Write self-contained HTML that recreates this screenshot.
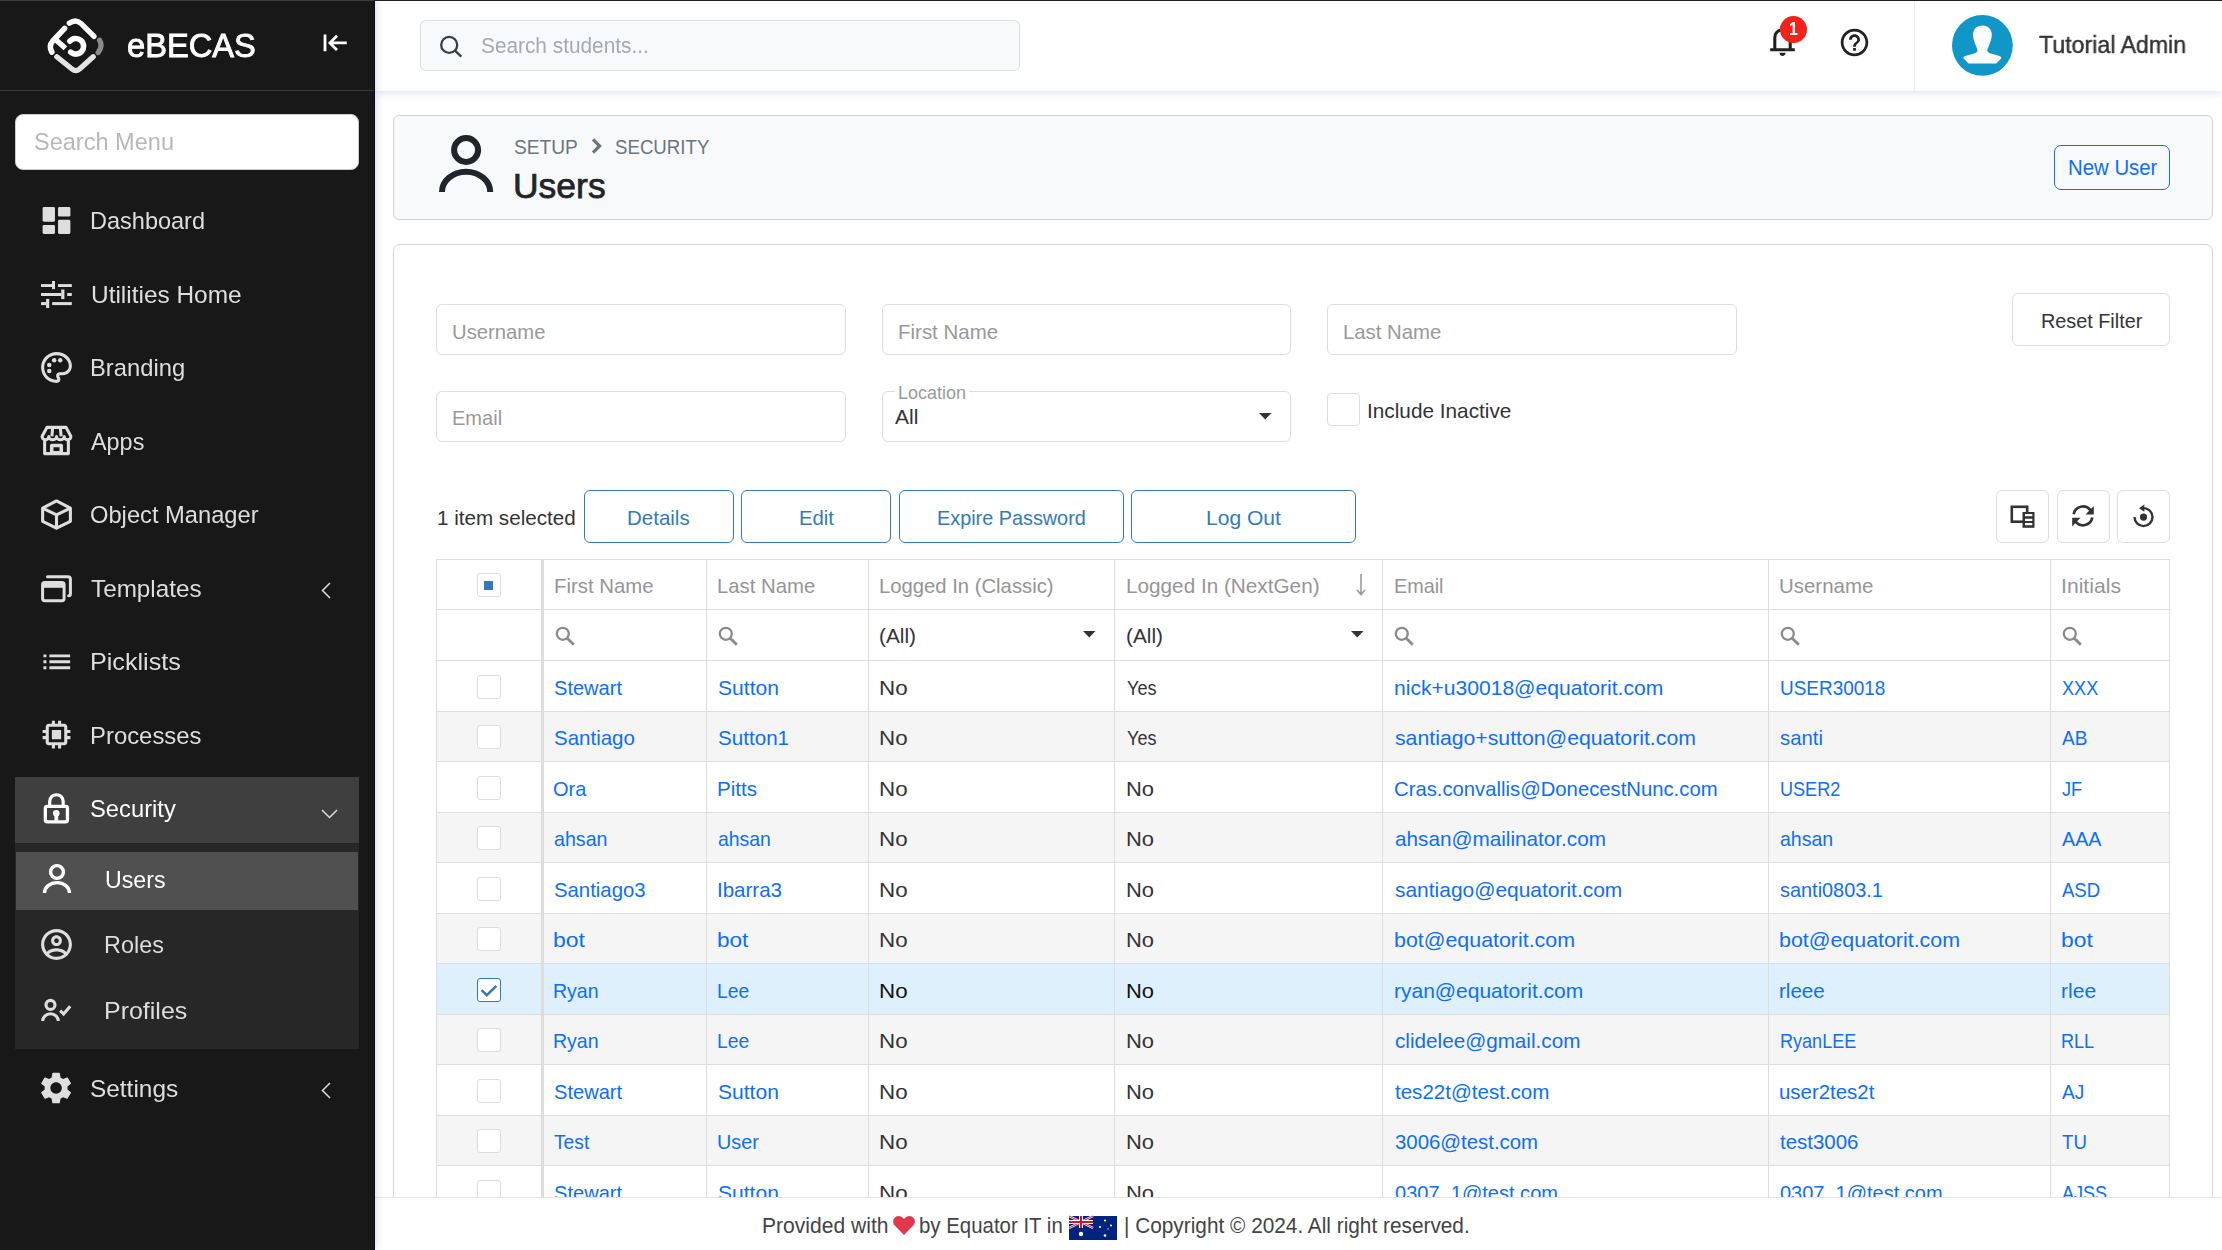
<!DOCTYPE html><html lang="en"><head><meta charset="utf-8"><title>Users - eBECAS</title><style>
*{box-sizing:border-box;margin:0;padding:0}
html,body{width:2222px;height:1250px;overflow:hidden;background:#fff}
body{font-family:"Liberation Sans",sans-serif;color:#333;position:relative}
.t{position:absolute;white-space:pre;transform-origin:0 0}
.abs{position:absolute}
svg{position:absolute;display:block;overflow:visible}
a{text-decoration:none;color:inherit}
h1{font-weight:400}
#sidebar{position:absolute;left:0;top:0;width:375px;height:1250px;background:#181818;color:#e0e0e0;border-right:1px solid #0b0b0b;box-shadow:2px 0 7px rgba(90,90,220,.2);z-index:5;will-change:transform}
#brand{position:absolute;left:0;top:0;width:374px;height:91px;border-bottom:1px solid #3a3a3a;border-top:1px solid #3d3d3d}
#msearch{position:absolute;left:15px;top:114px;width:344px;height:56px;background:#fff;border-radius:8px;border:1px solid #ccc}
.mi{position:absolute;left:15px;width:344px;height:66px}
#topbar{position:absolute;left:375px;top:0;width:1847px;height:91px;background:#fff;border-top:1px solid #222;box-shadow:0 1px 9px rgba(90,90,220,.22);z-index:4;will-change:transform}
#tsearch{position:absolute;left:45px;top:19px;width:600px;height:51px;background:#f8f9fb;border:1px solid #dcdcdc;border-radius:6px}
#phead{position:absolute;left:393px;top:115px;width:1820px;height:105px;background:#f8f9fb;border:1px solid #d2d2d2;border-radius:6px}
#card{position:absolute;left:393px;top:244px;width:1820px;height:1000px;background:#fff;border:1px solid #d6d6d6;border-radius:7px}
.inp{position:absolute;height:51px;border:1px solid #ddd;border-radius:6px;background:#fff}
.btn{position:absolute;height:53px;border:1px solid #337ab7;border-radius:6px;background:#fff;color:#337ab7}
.ibtn{position:absolute;width:53px;height:53px;border:1px solid #ddd;border-radius:6px;background:#fff}
#grid{position:absolute;left:436px;top:559px;width:1734px;height:700px;border-left:1px solid #ddd;border-right:1px solid #ddd;border-top:1px solid #ddd}
.row{position:absolute;left:0;width:1732px;border-bottom:1px solid #ddd}
.cell{position:absolute;top:0;height:100%;border-left:1px solid #ddd}
.cb{position:absolute;width:24px;height:24px;border:1px solid #ddd;border-radius:3px;background:#fff}
#footer{z-index:3;position:absolute;left:375px;top:1197px;width:1847px;height:53px;background:#fff;border-top:1px solid #e4e4e4;color:#444}
</style></head><body>
<aside id="sidebar">
<div id="brand">
<svg style="left:40.0px;top:9.8px" width="70" height="70" viewBox="40 10 70 70" ><g transform="translate(40 10)" fill="none" stroke-linecap="round" stroke-linejoin="round">
<path d="M29.300 12.200Q35.800 7.400 41.200 12.600L54 25.400" stroke="#fff" stroke-width="5.300"/>
<path d="M59.600 29.300Q63.200 34.600 58.200 41.500" stroke="#8a8a8a" stroke-width="5.300"/>
<path d="M16.800 45.800 32 58Q35.800 61.200 39.600 58L53.200 45.800" stroke="#e4e4e4" stroke-width="5.300"/>
<path d="M24.600 17.300 12.600 30.200Q8.400 35 11.900 41" stroke="#fff" stroke-width="5.500"/>
<path d="M16.600 29.500 25.400 37.200" stroke="#fff" stroke-width="5.400" stroke-linecap="butt"/>
<path d="M29.900 30.200A7.800 7.800 0 1 1 30.700 41.200" stroke="#fff" stroke-width="5.600"/>
</g></svg>
<span class="t" style="left:127.41px;top:26px;font-size:32.8px;line-height:37px;color:#fff;transform:scaleX(0.9949);-webkit-text-stroke:0.9px #fff;">eBECAS</span>
<svg style="left:322px;top:32px" width="26" height="20" viewBox="322 33 26 20" fill="none" stroke="#fff" stroke-width="2.800"><path d="M325 34.500v16.800M346.800 42.900H330M337 35.800l-7.100 7.100 7.100 7.100"/></svg>
</div>
<div id="msearch"><span class="t" style="left:18.04px;top:13px;font-size:24.4px;line-height:27px;color:#b8b8b8;transform:scaleX(0.9649);">Search Menu</span></div>
<nav>
<a class="mi" style="top:187px;">
<svg style="left:23.0px;top:14.8px" width="37.00" height="37.00" viewBox="0 0 24 24" fill="#dedede" ><rect x="3" y="3.250" width="8" height="9.500" rx=".9"/><rect x="3" y="14.850" width="8" height="5.900" rx=".9"/><rect x="13" y="3.250" width="8" height="6.200" rx=".9"/><rect x="13" y="11.500" width="8" height="9.250" rx=".9"/></svg>
<span class="t" style="left:74.68px;top:20px;font-size:24.5px;line-height:27px;color:#dedede;transform:scaleX(0.9596);">Dashboard</span>
</a>
<a class="mi" style="top:261px;">
<svg style="left:26.1px;top:19.8px" width="30.8" height="27" viewBox="41.1 280.9 30.8 27" fill="#dedede"><rect x="41.1" y="284.0" width="11.0" height="2.9"/><rect x="52.1" y="280.9" width="3.0" height="8.1"/><rect x="58.1" y="284.0" width="13.8" height="2.9"/><rect x="41.1" y="292.9" width="20.2" height="3.0"/><rect x="61.3" y="289.4" width="3.2" height="9.6"/><rect x="67.3" y="292.9" width="4.6" height="3.0"/><rect x="41.1" y="302.0" width="5.1" height="3.0"/><rect x="46.2" y="298.8" width="3.1" height="9.1"/><rect x="52.3" y="302.0" width="19.6" height="3.0"/></svg>
<span class="t" style="left:75.60px;top:20px;font-size:24.5px;line-height:27px;color:#dedede;transform:scaleX(0.9967);">Utilities Home</span>
</a>
<a class="mi" style="top:334px;">
<svg style="left:23.0px;top:14.8px" width="37.00" height="37.00" viewBox="0 0 24 24" fill="#dedede" ><path d="M12 22C6.490 22 2 17.510 2 12S6.490 2 12 2s10 4.040 10 9c0 3.310-2.690 6-6 6h-1.770c-.280 0-.500.220-.500.500 0 .120.050.230.130.330.410.470.640 1.060.640 1.670A2.500 2.500 0 0 1 12 22zm0-18c-4.410 0-8 3.590-8 8s3.590 8 8 8c.280 0 .500-.220.500-.500a.540.540 0 0 0-.140-.350c-.410-.460-.630-1.050-.630-1.650a2.500 2.500 0 0 1 2.500-2.500H16c2.210 0 4-1.790 4-4 0-3.860-3.590-7-8-7z"/><circle cx="7.300" cy="14.300" r="1.450"/><circle cx="7.300" cy="10.400" r="1.450"/><circle cx="10.500" cy="7.300" r="1.450"/><circle cx="14.400" cy="7.300" r="1.450"/></svg>
<span class="t" style="left:74.66px;top:20px;font-size:24.5px;line-height:27px;color:#dedede;transform:scaleX(0.9702);">Branding</span>
</a>
<a class="mi" style="top:408px;">
<svg style="left:23.0px;top:14.3px" width="37.00" height="37.00" viewBox="0 0 24 24" fill="#dedede" ><g fill="none" stroke="#dedede" stroke-width="2" stroke-linejoin="round"><path d="M5.800 3.500h12.400l3.100 5.800c.2 1.300-.8 2.200-2 2.200-1.300 0-2.300-.9-2.300-2 0 1.100-1.100 2-2.500 2s-2.500-.900-2.500-2c0 1.100-1.100 2-2.500 2s-2.500-.900-2.500-2c0 1.100-1 2-2.300 2-1.200 0-2.200-.900-2-2.200z"/><path d="M9.500 3.800 9 9.300M14.500 3.800l.500 5.500M4.300 11.300V20.500h15.400V11.300"/><path d="M8.900 20.500v-5.300h6.200v5.300" stroke-width="2.300"/></g><rect x="9" y="18.800" width="6" height="1.800"/></svg>
<span class="t" style="left:75.50px;top:20px;font-size:24.5px;line-height:27px;color:#dedede;transform:scaleX(0.9552);">Apps</span>
</a>
<a class="mi" style="top:481px;">
<svg style="left:23.0px;top:14.8px" width="37.00" height="37.00" viewBox="0 0 24 24" fill="#dedede" ><path d="M12 3.200 3 7.800v8.600l9 4.500 9-4.500V7.800zM3.300 8l8.700 4.300L20.700 8M12 12.300v8.400" fill="none" stroke="#dedede" stroke-width="2" stroke-linejoin="round"/></svg>
<span class="t" style="left:75.03px;top:20px;font-size:24.5px;line-height:27px;color:#dedede;transform:scaleX(0.9674);">Object Manager</span>
</a>
<a class="mi" style="top:555px;">
<svg style="left:25.0px;top:18.6px" width="33" height="29" viewBox="40 574 33 29"><path d="M47.500 576.700H68a2.400 2.400 0 0 1 2.400 2.400V594a1.800 1.800 0 0 1-1.800 1.800" fill="none" stroke="#dedede" stroke-width="3" stroke-linecap="round"/><rect x="42.600" y="582.600" width="21.500" height="18.100" rx="2.200" fill="none" stroke="#dedede" stroke-width="3"/><rect x="42" y="582" width="22.700" height="5.800" fill="#dedede"/></svg>
<span class="t" style="left:75.50px;top:20px;font-size:24.5px;line-height:27px;color:#dedede;transform:scaleX(0.9909);">Templates</span>
<svg style="left:306.3px;top:27.0px" width="10" height="17" viewBox="0 0 10 17" fill="none" stroke="#dcdcdc" stroke-width="1.500"><path d="M9 1 1.500 8.500 9 16"/></svg>
</a>
<a class="mi" style="top:628px;">
<svg style="left:23.7px;top:15.5px" width="35.60" height="35.60" viewBox="0 0 24 24" fill="#dedede" ><path d="M3 13h2v-2H3v2zm0 4h2v-2H3v2zm0-8h2V7H3v2zm4 4h14v-2H7v2zm0 4h14v-2H7v2zM7 7v2h14V7H7z"/></svg>
<span class="t" style="left:74.55px;top:20px;font-size:24.5px;line-height:27px;color:#dedede;transform:scaleX(1.0264);">Picklists</span>
</a>
<a class="mi" style="top:702px;">
<svg style="left:23.0px;top:14.3px" width="37.00" height="37.00" viewBox="0 0 24 24" fill="#dedede" ><path d="M15 9H9v6h6V9zm6 2V9h-2V7c0-1.100-.900-2-2-2h-2V3h-2v2h-2V3H9v2H7c-1.100 0-2 .900-2 2v2H3v2h2v2H3v2h2v2c0 1.100.900 2 2 2h2v2h2v-2h2v2h2v-2h2c1.100 0 2-.900 2-2v-2h2v-2h-2v-2h2zm-4 6H7V7h10v10z"/></svg>
<span class="t" style="left:74.65px;top:20px;font-size:24.5px;line-height:27px;color:#dedede;transform:scaleX(0.9748);">Processes</span>
</a>
<a class="mi" style="top:777px;background:#3f3f3f;">
<svg style="left:27.1px;top:14.0px" width="29" height="34" viewBox="42 791 29 34"><rect x="45.350" y="806.450" width="22.100" height="15.400" rx="1.800" fill="none" stroke="#fff" stroke-width="3.300"/><path d="M49.700 805.500V801.500A6.750 6.750 0 0 1 63.200 801.500V805.500" fill="none" stroke="#fff" stroke-width="3.200"/><circle cx="56.300" cy="813.300" r="3.300" fill="#fff"/><rect x="54.400" y="813.300" width="3.800" height="7.500" fill="#fff"/></svg>
<span class="t" style="left:74.53px;top:18px;font-size:24.5px;line-height:27px;color:#fff;transform:scaleX(0.9700);">Security</span>
<svg style="left:306.1px;top:31.8px" width="17" height="10" viewBox="0 0 17 10" fill="none" stroke="#dcdcdc" stroke-width="1.500"><path d="M1 1 8.500 8.500 16 1"/></svg>
</a>
<div class="abs" style="left:15px;top:843px;width:344px;height:206px;background:#272727">
<a class="abs" style="left:1px;top:9px;width:342px;height:58px;background:#505050;">
<svg style="left:25.5px;top:11.1px" width="30.0" height="30.0" viewBox="25.50 11.10 30.00 30.00" fill="none" stroke="#fff" stroke-width="3.40"><circle cx="40.50" cy="20.10" r="6.40"/><path d="M28.00 41.10A12.50 10.40 0 0 1 53.00 41.10"/></svg>
<span class="t" style="left:88.95px;top:14px;font-size:24.5px;line-height:27px;color:#fff;transform:scaleX(0.9454);">Users</span>
</a>
<a class="abs" style="left:1px;top:74px;width:342px;height:58px;">
<svg style="left:22.0px;top:8.7px" width="37.00" height="37.00" viewBox="0 0 24 24" fill="#dedede" ><path d="M12 2C6.480 2 2 6.480 2 12s4.480 10 10 10 10-4.480 10-10S17.520 2 12 2zM7.070 18.280c.430-.900 3.050-1.780 4.930-1.780s4.510.880 4.930 1.780A7.893 7.893 0 0 1 12 20c-1.860 0-3.570-.640-4.930-1.720zm11.290-1.450c-1.430-1.740-4.900-2.330-6.360-2.330s-4.930.590-6.360 2.330A7.950 7.950 0 0 1 4 12c0-4.410 3.590-8 8-8s8 3.590 8 8c0 1.820-.620 3.490-1.640 4.830zM12 6c-1.940 0-3.500 1.560-3.500 3.500S10.060 13 12 13s3.500-1.560 3.500-3.500S13.940 6 12 6zm0 5c-.830 0-1.500-.670-1.500-1.500S11.170 8 12 8s1.500.670 1.500 1.500S12.830 11 12 11z"/></svg>
<span class="t" style="left:87.99px;top:14px;font-size:24.5px;line-height:27px;color:#dedede;transform:scaleX(0.9555);">Roles</span>
</a>
<a class="abs" style="left:1px;top:140px;width:342px;height:58px;">
<svg style="left:24.3px;top:14.0px" width="33" height="26" viewBox="40 997 33 26" fill="none" stroke="#dedede" stroke-width="3.100"><circle cx="50.500" cy="1004.900" r="4.500"/><path d="M42.700 1021.100A7.800 7.400 0 0 1 58.300 1021.100"/><path d="M60.200 1010.700 63.600 1014 70.200 1006.200" stroke-width="3.100"/></svg>
<span class="t" style="left:87.86px;top:14px;font-size:24.5px;line-height:27px;color:#dedede;transform:scaleX(1.0196);">Profiles</span>
</a>
</div>
<a class="mi" style="top:1055px">
<svg style="left:22.4px;top:14.0px" width="38.20" height="38.20" viewBox="0 0 24 24" fill="#dedede" ><path d="M19.140 12.940c.040-.300.060-.610.060-.940 0-.320-.020-.640-.070-.940l2.030-1.580a.490.490 0 0 0 .120-.610l-1.920-3.320a.488.488 0 0 0-.590-.220l-2.390.960c-.500-.380-1.030-.700-1.620-.940l-.360-2.540a.484.484 0 0 0-.480-.410h-3.840c-.240 0-.430.170-.470.410l-.360 2.540c-.590.240-1.130.570-1.620.940l-2.390-.960c-.220-.080-.470 0-.590.220L2.740 8.870c-.120.210-.080.470.120.610l2.030 1.580c-.050.300-.090.630-.090.940s.020.640.070.940l-2.030 1.580a.490.490 0 0 0-.120.610l1.920 3.320c.120.220.370.290.590.220l2.390-.960c.500.380 1.030.700 1.620.940l.360 2.540c.050.240.240.410.480.410h3.840c.240 0 .440-.170.470-.410l.360-2.540c.590-.240 1.130-.560 1.620-.940l2.390.960c.220.080.470 0 .590-.220l1.920-3.320c.120-.220.070-.470-.120-.610l-2.010-1.580zM12 15.600c-1.980 0-3.600-1.620-3.600-3.600s1.620-3.600 3.600-3.600 3.600 1.620 3.600 3.600-1.620 3.600-3.600 3.600z"/></svg>
<span class="t" style="left:74.50px;top:20px;font-size:24.5px;line-height:27px;color:#dedede;transform:scaleX(0.9957);">Settings</span>
<svg style="left:306.0px;top:26.7px" width="10" height="17" viewBox="0 0 10 17" fill="none" stroke="#dcdcdc" stroke-width="1.500"><path d="M9 1 1.500 8.500 9 16"/></svg>
</a>
</nav></aside>
<header id="topbar">
<div id="tsearch">
<svg style="left:16.0px;top:12.0px" width="28" height="27" viewBox="437 33 28 27" fill="none" stroke="#383e45" stroke-width="2.300"><circle cx="449.200" cy="44.900" r="8" /><path d="M455 50.700 461.300 56.700"/></svg>
<span class="t" style="left:59.87px;top:12px;font-size:22.3px;line-height:25px;color:#a6a9ad;transform:scaleX(0.9334);">Search students...</span>
</div>
<svg style="left:1389.3px;top:21.3px" width="37" height="37" viewBox="0 0 24 24" fill="#222"><path d="M4 19v-2h2v-7q0-2.075 1.250-3.687T10.500 4.200v-.700q0-.625.438-1.062T12 2t1.063.438T13.500 3.500v.700q2 .500 3.250 2.113T18 10v7h2v2zm8 3q-.825 0-1.412-.587T10 20h4q0 .825-.587 1.413T12 22m-4-5h8v-7q0-1.650-1.175-2.825T12 6 9.175 7.175 8 10z"/></svg>
<div class="abs" style="left:1405.1px;top:15px;width:26.800px;height:26.800px;border-radius:50%;background:#f2231b"></div>
<span class="t" style="left:1414.14px;top:17px;font-size:18.5px;line-height:21px;font-weight:700;color:#fff;transform:scaleX(0.8600);">1</span>
<svg style="left:1463.0px;top:25.0px" width="33" height="33" viewBox="0 0 24 24" fill="#222"><path d="M11 18h2v-2h-2v2zm1-16C6.480 2 2 6.480 2 12s4.480 10 10 10 10-4.480 10-10S17.520 2 12 2zm0 18c-4.410 0-8-3.590-8-8s3.590-8 8-8 8 3.590 8 8-3.590 8-8 8zm0-14c-2.210 0-4 1.790-4 4h2c0-1.100.900-2 2-2s2 .900 2 2c0 2-3 1.750-3 5h2c0-2.250 3-2.500 3-5 0-2.210-1.790-4-4-4z"/></svg>
<div class="abs" style="left:1539px;top:0;width:1px;height:90px;background:#e9e9e9"></div>
<svg style="left:1577.1px;top:14.4px" width="60.8" height="60.8" viewBox="0 0 60.800 60.800"><circle cx="30.400" cy="30.400" r="30.400" fill="#1196c8"/><path d="M30.400 10.400C36 10.400 39.800 14 39.800 19.800 39.800 24 38 28 36.700 31.200 36 33 35.200 34 35.400 35.500 35.600 37 36.500 37.700 38 38.200L47.500 41C49 41.500 49.800 42.300 49.200 43.400L44.200 48.600H16.600L11.600 43.400C11 42.300 11.800 41.500 13.300 41L22.800 38.200C24.300 37.700 25.200 37 25.400 35.500 25.600 34 24.800 33 24.100 31.200 22.800 28 21 24 21 19.800 21 14 24.800 10.400 30.400 10.400Z" fill="#fff"/></svg>
<span class="t" style="left:1663.70px;top:30px;font-size:24.2px;line-height:27px;color:#333;transform:scaleX(0.9571);-webkit-text-stroke:0.45px #333;">Tutorial Admin</span>
</header>
<section id="phead">
<svg style="left:42.0px;top:17.0px" width="60" height="60" viewBox="436 133 60 60" fill="none" stroke="#212529" stroke-width="6"><circle cx="466.100" cy="150" r="12"/><path d="M442 192A24.100 20.300 0 0 1 490.200 192"/></svg>
<span class="t" style="left:120.30px;top:20px;font-size:20px;line-height:22px;color:#6c757d;transform:scaleX(0.9557);">SETUP</span>
<svg style="left:196.5px;top:22.2px" width="11" height="16" viewBox="0 0 11 16" fill="none" stroke="#6c757d" stroke-width="3.200"><path d="M2 1.400 8.600 8 2 14.600"/></svg>
<span class="t" style="left:220.70px;top:20px;font-size:20px;line-height:22px;color:#6c757d;transform:scaleX(0.9327);">SECURITY</span>
<h1 class="t" style="left:119.30px;top:50px;font-size:35.5px;line-height:40px;color:#212529;transform:scaleX(0.9994);-webkit-text-stroke:0.75px #212529;">Users</h1>
<a class="abs" style="left:1660px;top:29px;width:116px;height:45px;border:1.500px solid #0d6efd;border-radius:7px"></a>
<span class="t" style="left:1673.65px;top:40px;font-size:21.4px;line-height:24px;color:#0d6efd;transform:scaleX(0.9518);">New User</span>
</section>
<section id="card">
<div class="inp" style="left:42px;top:59px;width:410px"><span class="t" style="left:15.34px;top:15px;font-size:21px;line-height:23px;color:#999;transform:scaleX(0.9644);">Username</span></div>
<div class="inp" style="left:488px;top:59px;width:409px"><span class="t" style="left:14.92px;top:15px;font-size:21px;line-height:23px;color:#999;transform:scaleX(0.9753);">First Name</span></div>
<div class="inp" style="left:933px;top:59px;width:410px"><span class="t" style="left:15.33px;top:15px;font-size:21px;line-height:23px;color:#999;transform:scaleX(0.9683);">Last Name</span></div>
<div class="inp" style="left:42px;top:146px;width:410px"><span class="t" style="left:15.35px;top:14px;font-size:21px;line-height:23px;color:#999;transform:scaleX(0.9539);">Email</span></div>
<div class="inp" style="left:488px;top:146px;width:409px">
<div class="abs" style="left:11.5px;top:-8px;width:74.5px;height:16px;background:#fff"></div>
<span class="t" style="left:14.87px;top:-9px;font-size:17.5px;line-height:20px;color:#999;transform:scaleX(1.0290);">Location</span>
<span class="t" style="left:12.30px;top:13px;font-size:21px;line-height:23px;color:#333;transform:scaleX(1.0012);">All</span>
<svg style="left:376.0px;top:20.8px" width="12.5" height="6.5" viewBox="0 0 12.5 6.5"><path d="M0 0h12.5L6.25 6.5z" fill="#333"/></svg>
</div>
<div class="abs" style="left:933px;top:148px;width:33px;height:33px;border:1px solid #ddd;border-radius:4px;background:#fff"></div>
<span class="t" style="left:973.31px;top:154px;font-size:21px;line-height:23px;color:#333;transform:scaleX(0.9893);">Include Inactive</span>
<a class="abs" style="left:1618px;top:48px;width:158px;height:53px;border:1px solid #ddd;border-radius:6px;background:#fff"></a>
<span class="t" style="left:1646.56px;top:64px;font-size:21px;line-height:23px;color:#333;transform:scaleX(0.9430);">Reset Filter</span>
<span class="t" style="left:43.32px;top:261px;font-size:21px;line-height:23px;color:#333;transform:scaleX(0.9817);">1 item selected</span>
<a class="btn" style="left:190px;top:245px;width:150px"><span class="t" style="left:42.42px;top:15px;font-size:21px;line-height:23px;color:#337ab7;transform:scaleX(0.9762);">Details</span></a>
<a class="btn" style="left:347px;top:245px;width:150px"><span class="t" style="left:56.83px;top:15px;font-size:21px;line-height:23px;color:#337ab7;transform:scaleX(0.9674);">Edit</span></a>
<a class="btn" style="left:505px;top:245px;width:225px"><span class="t" style="left:36.66px;top:15px;font-size:21px;line-height:23px;color:#337ab7;transform:scaleX(0.9443);">Expire Password</span></a>
<a class="btn" style="left:737px;top:245px;width:225px"><span class="t" style="left:74.00px;top:15px;font-size:21px;line-height:23px;color:#337ab7;transform:scaleX(1.0015);">Log Out</span></a>
<a class="ibtn" style="left:1602px;top:245px"><svg style="left:12.0px;top:13.0px" width="28" height="26" viewBox="2009 504 28 26" ><rect x="2011.800" y="506.800" width="15.400" height="14.900" fill="none" stroke="#333" stroke-width="2.600"/><rect x="2022.500" y="512" width="12" height="15.800" fill="#333"/><path d="M2025 515.150h7.300M2025 519.850h7.300M2025 524.100h7.300" stroke="#fff" stroke-width="2.100"/></svg></a>
<a class="ibtn" style="left:1663px;top:245px"><svg style="left:12.0px;top:12.0px" width="26" height="26" viewBox="2070 503 26 26" ><path d="M2073.700 514.200A9.400 9.400 0 0 1 2090.600 510.400" fill="none" stroke="#333" stroke-width="2.700"/><path d="M2085.500 514.600 2093.800 506v8.600z" fill="#333"/><path d="M2092.300 517.500A9.400 9.400 0 0 1 2075.400 521.300" fill="none" stroke="#333" stroke-width="2.700"/><path d="M2080.500 517.800 2072.200 526.400v-8.600z" fill="#333"/></svg></a>
<a class="ibtn" style="left:1723px;top:245px"><svg style="left:13.0px;top:12.0px" width="26" height="26" viewBox="2131 503 26 26" ><path d="M2143.500 508.100A9 9 0 1 1 2134.500 517.100" fill="none" stroke="#333" stroke-width="2.400"/><path d="M2139 508.200 2144.300 504.600v7.200z" fill="#333"/><circle cx="2143.500" cy="517.100" r="3.600" fill="#333"/></svg></a>
</section>
<div id="grid" role="grid">
<div class="row" role="row" style="top:0px;height:50px;background:#fff;">
<div class="cell" role="gridcell" style="left:0;width:104px;border-left:0;"><div class="cb" style="left:40px;top:13px"><div class="abs" style="left:6px;top:7px;width:9px;height:9px;background:#337ab7"></div></div></div>
<div class="cell" role="gridcell" style="left:104px;width:165px;border-left:3px solid #ddd;"><span class="t" style="left:9.53px;top:14px;font-size:21px;line-height:23px;color:#959595;transform:scaleX(0.9704);">First Name</span></div>
<div class="cell" role="gridcell" style="left:269px;width:162px;"><span class="t" style="left:10.33px;top:14px;font-size:21px;line-height:23px;color:#959595;transform:scaleX(0.9683);">Last Name</span></div>
<div class="cell" role="gridcell" style="left:431px;width:246px;"><span class="t" style="left:10.44px;top:14px;font-size:21px;line-height:23px;color:#959595;transform:scaleX(0.9646);">Logged In (Classic)</span></div>
<div class="cell" role="gridcell" style="left:677px;width:268px;"><span class="t" style="left:10.61px;top:14px;font-size:21px;line-height:23px;color:#959595;transform:scaleX(0.9870);">Logged In (NextGen)</span><svg style="left:240.5px;top:13.5px" width="10" height="22" viewBox="0 0 10 22" fill="none" stroke="#959595" stroke-width="1.500"><path d="M5 0v20M1 16l4 4.500L9 16"/></svg></div>
<div class="cell" role="gridcell" style="left:945px;width:386px;"><span class="t" style="left:10.56px;top:14px;font-size:21px;line-height:23px;color:#959595;transform:scaleX(0.9421);">Email</span></div>
<div class="cell" role="gridcell" style="left:1331px;width:282px;"><span class="t" style="left:9.83px;top:14px;font-size:21px;line-height:23px;color:#959595;transform:scaleX(0.9738);">Username</span></div>
<div class="cell" role="gridcell" style="left:1613px;width:119px;"><span class="t" style="left:9.69px;top:14px;font-size:21px;line-height:23px;color:#959595;transform:scaleX(1.0082);">Initials</span></div>
</div>
<div class="row" role="row" style="top:50px;height:51px;background:#fff;">
<div class="cell" role="gridcell" style="left:0;width:104px;border-left:0;"></div>
<div class="cell" role="gridcell" style="left:104px;width:165px;border-left:3px solid #ddd;"><svg style="left:10.5px;top:15.5px" width="20" height="20" viewBox="0 0 20 20" fill="none" stroke="#8a8a8a" stroke-width="2.300"><circle cx="7.800" cy="7.800" r="6"/><path d="M12 12l6.800 6.800" stroke-width="2.800"/></svg></div>
<div class="cell" role="gridcell" style="left:269px;width:162px;"><svg style="left:10.5px;top:15.5px" width="20" height="20" viewBox="0 0 20 20" fill="none" stroke="#8a8a8a" stroke-width="2.300"><circle cx="7.800" cy="7.800" r="6"/><path d="M12 12l6.800 6.800" stroke-width="2.800"/></svg></div>
<div class="cell" role="gridcell" style="left:431px;width:246px;"><span class="t" style="left:10.41px;top:14px;font-size:21px;line-height:23px;color:#333;transform:scaleX(0.9906);">(All)</span><svg style="left:213.5px;top:20.8px" width="12.5" height="6.5" viewBox="0 0 12.5 6.5"><path d="M0 0h12.5L6.25 6.5z" fill="#333"/></svg></div>
<div class="cell" role="gridcell" style="left:677px;width:268px;"><span class="t" style="left:10.51px;top:14px;font-size:21px;line-height:23px;color:#333;transform:scaleX(0.9906);">(All)</span><svg style="left:235.5px;top:20.8px" width="12.5" height="6.5" viewBox="0 0 12.5 6.5"><path d="M0 0h12.5L6.25 6.5z" fill="#333"/></svg></div>
<div class="cell" role="gridcell" style="left:945px;width:386px;"><svg style="left:10.5px;top:15.5px" width="20" height="20" viewBox="0 0 20 20" fill="none" stroke="#8a8a8a" stroke-width="2.300"><circle cx="7.800" cy="7.800" r="6"/><path d="M12 12l6.800 6.800" stroke-width="2.800"/></svg></div>
<div class="cell" role="gridcell" style="left:1331px;width:282px;"><svg style="left:10.5px;top:15.5px" width="20" height="20" viewBox="0 0 20 20" fill="none" stroke="#8a8a8a" stroke-width="2.300"><circle cx="7.800" cy="7.800" r="6"/><path d="M12 12l6.800 6.800" stroke-width="2.800"/></svg></div>
<div class="cell" role="gridcell" style="left:1613px;width:119px;"><svg style="left:10.5px;top:15.5px" width="20" height="20" viewBox="0 0 20 20" fill="none" stroke="#8a8a8a" stroke-width="2.300"><circle cx="7.800" cy="7.800" r="6"/><path d="M12 12l6.800 6.800" stroke-width="2.800"/></svg></div>
</div>
<div class="row" role="row" style="top:101px;height:51px;background:#fff;">
<div class="cell" role="gridcell" style="left:0;width:104px;border-left:0;"><div class="cb" style="left:40px;top:14px"></div></div>
<div class="cell" role="gridcell" style="left:104px;width:165px;border-left:3px solid #ddd;"><a class="t" style="left:9.60px;top:15px;font-size:21px;line-height:23px;color:#0d6efd;transform:scaleX(0.9557);">Stewart</a></div>
<div class="cell" role="gridcell" style="left:269px;width:162px;"><a class="t" style="left:11.20px;top:15px;font-size:21px;line-height:23px;color:#0d6efd;transform:scaleX(1.0044);">Sutton</a></div>
<div class="cell" role="gridcell" style="left:431px;width:246px;"><span class="t" style="left:10.14px;top:15px;font-size:21px;line-height:23px;color:#333;transform:scaleX(1.0649);">No</span></div>
<div class="cell" role="gridcell" style="left:677px;width:268px;"><span class="t" style="left:11.70px;top:15px;font-size:21px;line-height:23px;color:#333;transform:scaleX(0.8600);">Yes</span></div>
<div class="cell" role="gridcell" style="left:945px;width:386px;"><a class="t" style="left:10.60px;top:15px;font-size:21px;line-height:23px;color:#0d6efd;transform:scaleX(1.0036);">nick+u30018@equatorit.com</a></div>
<div class="cell" role="gridcell" style="left:1331px;width:282px;"><a class="t" style="left:10.50px;top:15px;font-size:21px;line-height:23px;color:#0d6efd;transform:scaleX(0.9021);">USER30018</a></div>
<div class="cell" role="gridcell" style="left:1613px;width:119px;"><a class="t" style="left:10.60px;top:15px;font-size:21px;line-height:23px;color:#0d6efd;transform:scaleX(0.8616);">XXX</a></div>
</div>
<div class="row" role="row" style="top:152px;height:50px;background:#f5f5f5;">
<div class="cell" role="gridcell" style="left:0;width:104px;border-left:0;"><div class="cb" style="left:40px;top:13px"></div></div>
<div class="cell" role="gridcell" style="left:104px;width:165px;border-left:3px solid #ddd;"><a class="t" style="left:9.60px;top:14px;font-size:21px;line-height:23px;color:#0d6efd;transform:scaleX(0.9754);">Santiago</a></div>
<div class="cell" role="gridcell" style="left:269px;width:162px;"><a class="t" style="left:11.20px;top:14px;font-size:21px;line-height:23px;color:#0d6efd;transform:scaleX(0.9817);">Sutton1</a></div>
<div class="cell" role="gridcell" style="left:431px;width:246px;"><span class="t" style="left:10.14px;top:14px;font-size:21px;line-height:23px;color:#333;transform:scaleX(1.0649);">No</span></div>
<div class="cell" role="gridcell" style="left:677px;width:268px;"><span class="t" style="left:11.70px;top:14px;font-size:21px;line-height:23px;color:#333;transform:scaleX(0.8600);">Yes</span></div>
<div class="cell" role="gridcell" style="left:945px;width:386px;"><a class="t" style="left:11.60px;top:14px;font-size:21px;line-height:23px;color:#0d6efd;transform:scaleX(1.0117);">santiago+sutton@equatorit.com</a></div>
<div class="cell" role="gridcell" style="left:1331px;width:282px;"><a class="t" style="left:11.40px;top:14px;font-size:21px;line-height:23px;color:#0d6efd;transform:scaleX(0.9681);">santi</a></div>
<div class="cell" role="gridcell" style="left:1613px;width:119px;"><a class="t" style="left:10.60px;top:14px;font-size:21px;line-height:23px;color:#0d6efd;transform:scaleX(0.9072);">AB</a></div>
</div>
<div class="row" role="row" style="top:202px;height:51px;background:#fff;">
<div class="cell" role="gridcell" style="left:0;width:104px;border-left:0;"><div class="cb" style="left:40px;top:14px"></div></div>
<div class="cell" role="gridcell" style="left:104px;width:165px;border-left:3px solid #ddd;"><a class="t" style="left:8.65px;top:15px;font-size:21px;line-height:23px;color:#0d6efd;transform:scaleX(0.9526);">Ora</a></div>
<div class="cell" role="gridcell" style="left:269px;width:162px;"><a class="t" style="left:10.22px;top:15px;font-size:21px;line-height:23px;color:#0d6efd;transform:scaleX(0.9786);">Pitts</a></div>
<div class="cell" role="gridcell" style="left:431px;width:246px;"><span class="t" style="left:10.14px;top:15px;font-size:21px;line-height:23px;color:#333;transform:scaleX(1.0649);">No</span></div>
<div class="cell" role="gridcell" style="left:677px;width:268px;"><span class="t" style="left:10.65px;top:15px;font-size:21px;line-height:23px;color:#333;transform:scaleX(1.0451);">No</span></div>
<div class="cell" role="gridcell" style="left:945px;width:386px;"><a class="t" style="left:10.63px;top:15px;font-size:21px;line-height:23px;color:#0d6efd;transform:scaleX(0.9650);">Cras.convallis@DonecestNunc.com</a></div>
<div class="cell" role="gridcell" style="left:1331px;width:282px;"><a class="t" style="left:10.54px;top:15px;font-size:21px;line-height:23px;color:#0d6efd;transform:scaleX(0.8600);">USER2</a></div>
<div class="cell" role="gridcell" style="left:1613px;width:119px;"><a class="t" style="left:10.60px;top:15px;font-size:21px;line-height:23px;color:#0d6efd;transform:scaleX(0.8600);">JF</a></div>
</div>
<div class="row" role="row" style="top:253px;height:50px;background:#f5f5f5;">
<div class="cell" role="gridcell" style="left:0;width:104px;border-left:0;"><div class="cb" style="left:40px;top:13px"></div></div>
<div class="cell" role="gridcell" style="left:104px;width:165px;border-left:3px solid #ddd;"><a class="t" style="left:9.60px;top:14px;font-size:21px;line-height:23px;color:#0d6efd;transform:scaleX(0.9357);">ahsan</a></div>
<div class="cell" role="gridcell" style="left:269px;width:162px;"><a class="t" style="left:11.20px;top:14px;font-size:21px;line-height:23px;color:#0d6efd;transform:scaleX(0.9250);">ahsan</a></div>
<div class="cell" role="gridcell" style="left:431px;width:246px;"><span class="t" style="left:10.14px;top:14px;font-size:21px;line-height:23px;color:#333;transform:scaleX(1.0649);">No</span></div>
<div class="cell" role="gridcell" style="left:677px;width:268px;"><span class="t" style="left:10.65px;top:14px;font-size:21px;line-height:23px;color:#333;transform:scaleX(1.0451);">No</span></div>
<div class="cell" role="gridcell" style="left:945px;width:386px;"><a class="t" style="left:11.60px;top:14px;font-size:21px;line-height:23px;color:#0d6efd;transform:scaleX(0.9863);">ahsan@mailinator.com</a></div>
<div class="cell" role="gridcell" style="left:1331px;width:282px;"><a class="t" style="left:11.40px;top:14px;font-size:21px;line-height:23px;color:#0d6efd;transform:scaleX(0.9304);">ahsan</a></div>
<div class="cell" role="gridcell" style="left:1613px;width:119px;"><a class="t" style="left:10.60px;top:14px;font-size:21px;line-height:23px;color:#0d6efd;transform:scaleX(0.9378);">AAA</a></div>
</div>
<div class="row" role="row" style="top:303px;height:51px;background:#fff;">
<div class="cell" role="gridcell" style="left:0;width:104px;border-left:0;"><div class="cb" style="left:40px;top:14px"></div></div>
<div class="cell" role="gridcell" style="left:104px;width:165px;border-left:3px solid #ddd;"><a class="t" style="left:9.60px;top:15px;font-size:21px;line-height:23px;color:#0d6efd;transform:scaleX(0.9680);">Santiago3</a></div>
<div class="cell" role="gridcell" style="left:269px;width:162px;"><a class="t" style="left:10.22px;top:15px;font-size:21px;line-height:23px;color:#0d6efd;transform:scaleX(0.9775);">Ibarra3</a></div>
<div class="cell" role="gridcell" style="left:431px;width:246px;"><span class="t" style="left:10.14px;top:15px;font-size:21px;line-height:23px;color:#333;transform:scaleX(1.0649);">No</span></div>
<div class="cell" role="gridcell" style="left:677px;width:268px;"><span class="t" style="left:10.65px;top:15px;font-size:21px;line-height:23px;color:#333;transform:scaleX(1.0451);">No</span></div>
<div class="cell" role="gridcell" style="left:945px;width:386px;"><a class="t" style="left:11.60px;top:15px;font-size:21px;line-height:23px;color:#0d6efd;transform:scaleX(0.9971);">santiago@equatorit.com</a></div>
<div class="cell" role="gridcell" style="left:1331px;width:282px;"><a class="t" style="left:11.40px;top:15px;font-size:21px;line-height:23px;color:#0d6efd;transform:scaleX(0.9480);">santi0803.1</a></div>
<div class="cell" role="gridcell" style="left:1613px;width:119px;"><a class="t" style="left:10.60px;top:15px;font-size:21px;line-height:23px;color:#0d6efd;transform:scaleX(0.8834);">ASD</a></div>
</div>
<div class="row" role="row" style="top:354px;height:50px;background:#f5f5f5;">
<div class="cell" role="gridcell" style="left:0;width:104px;border-left:0;"><div class="cb" style="left:40px;top:13px"></div></div>
<div class="cell" role="gridcell" style="left:104px;width:165px;border-left:3px solid #ddd;"><a class="t" style="left:8.50px;top:14px;font-size:21px;line-height:23px;color:#0d6efd;transform:scaleX(1.0967);">bot</a></div>
<div class="cell" role="gridcell" style="left:269px;width:162px;"><a class="t" style="left:10.12px;top:14px;font-size:21px;line-height:23px;color:#0d6efd;transform:scaleX(1.0755);">bot</a></div>
<div class="cell" role="gridcell" style="left:431px;width:246px;"><span class="t" style="left:10.14px;top:14px;font-size:21px;line-height:23px;color:#333;transform:scaleX(1.0649);">No</span></div>
<div class="cell" role="gridcell" style="left:677px;width:268px;"><span class="t" style="left:10.65px;top:14px;font-size:21px;line-height:23px;color:#333;transform:scaleX(1.0451);">No</span></div>
<div class="cell" role="gridcell" style="left:945px;width:386px;"><a class="t" style="left:10.58px;top:14px;font-size:21px;line-height:23px;color:#0d6efd;transform:scaleX(1.0185);">bot@equatorit.com</a></div>
<div class="cell" role="gridcell" style="left:1331px;width:282px;"><a class="t" style="left:10.38px;top:14px;font-size:21px;line-height:23px;color:#0d6efd;transform:scaleX(1.0185);">bot@equatorit.com</a></div>
<div class="cell" role="gridcell" style="left:1613px;width:119px;"><a class="t" style="left:9.51px;top:14px;font-size:21px;line-height:23px;color:#0d6efd;transform:scaleX(1.0896);">bot</a></div>
</div>
<div class="row" role="row" style="top:404px;height:51px;background:#dff0fd;">
<div class="cell" role="gridcell" style="left:0;width:104px;border-left:0;"><div class="cb" style="left:40px;top:14px;border-color:#337ab7"><svg style="left:0;top:0" width="22" height="22" viewBox="1 1 22 22" fill="none" stroke="#337ab7" stroke-width="2.500"><path d="M4.600 12.100 9.700 17.200 19.400 7.800"/></svg></div></div>
<div class="cell" role="gridcell" style="left:104px;width:165px;border-left:3px solid #ddd;"><a class="t" style="left:8.67px;top:15px;font-size:21px;line-height:23px;color:#0d6efd;transform:scaleX(0.9294);">Ryan</a></div>
<div class="cell" role="gridcell" style="left:269px;width:162px;"><a class="t" style="left:10.28px;top:15px;font-size:21px;line-height:23px;color:#0d6efd;transform:scaleX(0.9173);">Lee</a></div>
<div class="cell" role="gridcell" style="left:431px;width:246px;"><span class="t" style="left:10.14px;top:15px;font-size:21px;line-height:23px;color:#111;transform:scaleX(1.0649);">No</span></div>
<div class="cell" role="gridcell" style="left:677px;width:268px;"><span class="t" style="left:10.65px;top:15px;font-size:21px;line-height:23px;color:#111;transform:scaleX(1.0451);">No</span></div>
<div class="cell" role="gridcell" style="left:945px;width:386px;"><a class="t" style="left:10.60px;top:15px;font-size:21px;line-height:23px;color:#0d6efd;transform:scaleX(0.9989);">ryan@equatorit.com</a></div>
<div class="cell" role="gridcell" style="left:1331px;width:282px;"><a class="t" style="left:10.42px;top:15px;font-size:21px;line-height:23px;color:#0d6efd;transform:scaleX(0.9774);">rleee</a></div>
<div class="cell" role="gridcell" style="left:1613px;width:119px;"><a class="t" style="left:9.60px;top:15px;font-size:21px;line-height:23px;color:#0d6efd;transform:scaleX(1.0019);">rlee</a></div>
</div>
<div class="row" role="row" style="top:455px;height:50px;background:#f5f5f5;">
<div class="cell" role="gridcell" style="left:0;width:104px;border-left:0;"><div class="cb" style="left:40px;top:13px"></div></div>
<div class="cell" role="gridcell" style="left:104px;width:165px;border-left:3px solid #ddd;"><a class="t" style="left:8.67px;top:14px;font-size:21px;line-height:23px;color:#0d6efd;transform:scaleX(0.9294);">Ryan</a></div>
<div class="cell" role="gridcell" style="left:269px;width:162px;"><a class="t" style="left:10.28px;top:14px;font-size:21px;line-height:23px;color:#0d6efd;transform:scaleX(0.9173);">Lee</a></div>
<div class="cell" role="gridcell" style="left:431px;width:246px;"><span class="t" style="left:10.14px;top:14px;font-size:21px;line-height:23px;color:#333;transform:scaleX(1.0649);">No</span></div>
<div class="cell" role="gridcell" style="left:677px;width:268px;"><span class="t" style="left:10.65px;top:14px;font-size:21px;line-height:23px;color:#333;transform:scaleX(1.0451);">No</span></div>
<div class="cell" role="gridcell" style="left:945px;width:386px;"><a class="t" style="left:11.60px;top:14px;font-size:21px;line-height:23px;color:#0d6efd;transform:scaleX(0.9849);">clidelee@gmail.com</a></div>
<div class="cell" role="gridcell" style="left:1331px;width:282px;"><a class="t" style="left:10.54px;top:14px;font-size:21px;line-height:23px;color:#0d6efd;transform:scaleX(0.8600);">RyanLEE</a></div>
<div class="cell" role="gridcell" style="left:1613px;width:119px;"><a class="t" style="left:9.74px;top:14px;font-size:21px;line-height:23px;color:#0d6efd;transform:scaleX(0.8600);">RLL</a></div>
</div>
<div class="row" role="row" style="top:505px;height:51px;background:#fff;">
<div class="cell" role="gridcell" style="left:0;width:104px;border-left:0;"><div class="cb" style="left:40px;top:14px"></div></div>
<div class="cell" role="gridcell" style="left:104px;width:165px;border-left:3px solid #ddd;"><a class="t" style="left:9.60px;top:15px;font-size:21px;line-height:23px;color:#0d6efd;transform:scaleX(0.9571);">Stewart</a></div>
<div class="cell" role="gridcell" style="left:269px;width:162px;"><a class="t" style="left:11.20px;top:15px;font-size:21px;line-height:23px;color:#0d6efd;transform:scaleX(1.0028);">Sutton</a></div>
<div class="cell" role="gridcell" style="left:431px;width:246px;"><span class="t" style="left:10.14px;top:15px;font-size:21px;line-height:23px;color:#333;transform:scaleX(1.0649);">No</span></div>
<div class="cell" role="gridcell" style="left:677px;width:268px;"><span class="t" style="left:10.65px;top:15px;font-size:21px;line-height:23px;color:#333;transform:scaleX(1.0451);">No</span></div>
<div class="cell" role="gridcell" style="left:945px;width:386px;"><a class="t" style="left:11.60px;top:15px;font-size:21px;line-height:23px;color:#0d6efd;transform:scaleX(0.9778);">tes22t@test.com</a></div>
<div class="cell" role="gridcell" style="left:1331px;width:282px;"><a class="t" style="left:10.43px;top:15px;font-size:21px;line-height:23px;color:#0d6efd;transform:scaleX(0.9720);">user2tes2t</a></div>
<div class="cell" role="gridcell" style="left:1613px;width:119px;"><a class="t" style="left:10.60px;top:15px;font-size:21px;line-height:23px;color:#0d6efd;transform:scaleX(0.9128);">AJ</a></div>
</div>
<div class="row" role="row" style="top:556px;height:50px;background:#f5f5f5;">
<div class="cell" role="gridcell" style="left:0;width:104px;border-left:0;"><div class="cb" style="left:40px;top:13px"></div></div>
<div class="cell" role="gridcell" style="left:104px;width:165px;border-left:3px solid #ddd;"><a class="t" style="left:9.60px;top:14px;font-size:21px;line-height:23px;color:#0d6efd;transform:scaleX(0.9152);">Test</a></div>
<div class="cell" role="gridcell" style="left:269px;width:162px;"><a class="t" style="left:10.26px;top:14px;font-size:21px;line-height:23px;color:#0d6efd;transform:scaleX(0.9436);">User</a></div>
<div class="cell" role="gridcell" style="left:431px;width:246px;"><span class="t" style="left:10.14px;top:14px;font-size:21px;line-height:23px;color:#333;transform:scaleX(1.0649);">No</span></div>
<div class="cell" role="gridcell" style="left:677px;width:268px;"><span class="t" style="left:10.65px;top:14px;font-size:21px;line-height:23px;color:#333;transform:scaleX(1.0451);">No</span></div>
<div class="cell" role="gridcell" style="left:945px;width:386px;"><a class="t" style="left:11.60px;top:14px;font-size:21px;line-height:23px;color:#0d6efd;transform:scaleX(0.9708);">3006@test.com</a></div>
<div class="cell" role="gridcell" style="left:1331px;width:282px;"><a class="t" style="left:11.40px;top:14px;font-size:21px;line-height:23px;color:#0d6efd;transform:scaleX(0.9739);">test3006</a></div>
<div class="cell" role="gridcell" style="left:1613px;width:119px;"><a class="t" style="left:10.60px;top:14px;font-size:21px;line-height:23px;color:#0d6efd;transform:scaleX(0.8871);">TU</a></div>
</div>
<div class="row" role="row" style="top:606px;height:51px;background:#fff;">
<div class="cell" role="gridcell" style="left:0;width:104px;border-left:0;"><div class="cb" style="left:40px;top:14px"></div></div>
<div class="cell" role="gridcell" style="left:104px;width:165px;border-left:3px solid #ddd;"><a class="t" style="left:9.60px;top:15px;font-size:21px;line-height:23px;color:#0d6efd;transform:scaleX(0.9571);">Stewart</a></div>
<div class="cell" role="gridcell" style="left:269px;width:162px;"><a class="t" style="left:11.20px;top:15px;font-size:21px;line-height:23px;color:#0d6efd;transform:scaleX(1.0028);">Sutton</a></div>
<div class="cell" role="gridcell" style="left:431px;width:246px;"><span class="t" style="left:10.14px;top:15px;font-size:21px;line-height:23px;color:#333;transform:scaleX(1.0649);">No</span></div>
<div class="cell" role="gridcell" style="left:677px;width:268px;"><span class="t" style="left:10.65px;top:15px;font-size:21px;line-height:23px;color:#333;transform:scaleX(1.0451);">No</span></div>
<div class="cell" role="gridcell" style="left:945px;width:386px;"><a class="t" style="left:11.60px;top:15px;font-size:21px;line-height:23px;color:#0d6efd;transform:scaleX(0.9545);">0307_1@test.com</a></div>
<div class="cell" role="gridcell" style="left:1331px;width:282px;"><a class="t" style="left:11.40px;top:15px;font-size:21px;line-height:23px;color:#0d6efd;transform:scaleX(0.9521);">0307_1@test.com</a></div>
<div class="cell" role="gridcell" style="left:1613px;width:119px;"><a class="t" style="left:10.60px;top:15px;font-size:21px;line-height:23px;color:#0d6efd;transform:scaleX(0.8600);">AJSS</a></div>
</div>
</div>
<footer id="footer">
<span class="t" style="left:386.62px;top:16px;font-size:21.4px;line-height:24px;color:#444;transform:scaleX(0.9849);">Provided with</span>
<svg style="left:517.7px;top:17.5px" width="22" height="19" viewBox="0 0 22 19"><path d="M11 19 1.800 9.500A5.600 5.600 0 0 1 1.600 1.700 5.400 5.400 0 0 1 9.500 1.500L11 3l1.500-1.500a5.400 5.400 0 0 1 7.900.200 5.600 5.600 0 0 1-.200 7.800z" fill="#e0384c"/></svg>
<span class="t" style="left:544.05px;top:16px;font-size:21.4px;line-height:24px;color:#444;transform:scaleX(0.9544);">by Equator IT in</span>
<svg style="left:694.0px;top:17.5px" width="48" height="24" viewBox="0 0 48 24"><rect width="48" height="24" fill="#00247d"/><path d="M0 0l24 12M24 0 0 12" stroke="#fff" stroke-width="2.400"/><path d="M0 0l24 12M24 0 0 12" stroke="#cf142b" stroke-width="1"/><path d="M12 0v12M0 6h24" stroke="#fff" stroke-width="4"/><path d="M12 0v12M0 6h24" stroke="#cf142b" stroke-width="2.200"/><circle cx="12" cy="18" r="2.200" fill="#fff"/><circle cx="36" cy="4.500" r="1.100" fill="#fff"/><circle cx="42" cy="9.500" r="1.100" fill="#fff"/><circle cx="31" cy="11" r="1.100" fill="#fff"/><circle cx="36" cy="19.500" r="1.300" fill="#fff"/><circle cx="39" cy="13" r=".700" fill="#fff"/></svg>
<span class="t" style="left:748.63px;top:16px;font-size:21.4px;line-height:24px;color:#444;transform:scaleX(0.9727);">| Copyright © 2024. All right reserved.</span>
</footer>
</body></html>
